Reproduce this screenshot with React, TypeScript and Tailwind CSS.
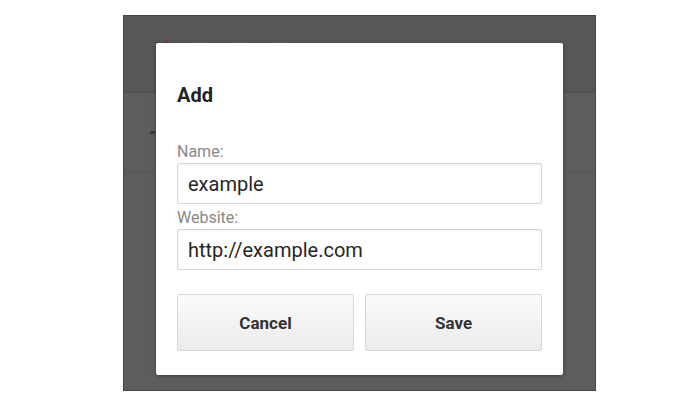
export default function App() {
  return (
    <div className="w-[700px] h-[400px] bg-white pt-[15px] pl-[123px] font-['Roboto',sans-serif]">
      <div className="relative w-[473px] h-[376px] bg-[#5d5d5d] border border-[#444] flex flex-col">
        {/* dimmed page behind the dialog */}
        <div className="h-[77px] bg-[#575757] border-b border-[#4f4f4f] flex items-start gap-6 pl-[40px] pt-[24px]">
          <div className="w-[4px] h-[4px] rounded-full bg-[#7a3a44]" />
          <div className="w-[18px] h-[2px] mt-[2px] bg-[#626262]" />
          <div className="w-[12px] h-[2px] mt-[2px] bg-[#626262]" />
          <div className="w-[20px] h-[2px] mt-[2px] bg-[#626262]" />
        </div>
        <div className="h-[80px] border-b border-[#565656] flex items-center pl-[26px]">
          <div className="w-[5px] h-[3px] bg-[#3c3c3c]" />
        </div>
        <div className="flex-1" />

        {/* dialog */}
        <div className="absolute left-[32px] top-[27px] w-[407px] h-[332px] bg-white rounded-[2px] shadow-[0_1px_4px_rgba(0,0,0,0.35)] px-[21px] pt-[40px] pb-[23px] flex flex-col">
          <h2 className="text-[20px] leading-[24px] font-bold text-[#222]">Add</h2>
          <label className="mt-[36px] text-[16px] leading-[18px] text-[#888]">Name:</label>
          <div className="mt-[2px] h-[41px] border border-[#d6d6d6] rounded-[2px] shadow-[inset_0_1px_2px_rgba(0,0,0,0.06)] flex items-center pl-[10px] text-[20px] text-[#262626]">
            example
          </div>
          <label className="mt-[5px] text-[16px] leading-[18px] text-[#888]">Website:</label>
          <div className="mt-[2px] h-[41px] border border-[#d6d6d6] rounded-[2px] shadow-[inset_0_1px_2px_rgba(0,0,0,0.06)] flex items-center pl-[10px] text-[20px] text-[#262626]">
            http://example.com
          </div>
          <div className="mt-[24px] flex gap-[11px]">
            <button className="flex-1 h-[57px] pt-[3px] border border-[#d9d9d9] rounded-[2px] bg-gradient-to-b from-[#fbfbfb] to-[#ebebeb] text-[17px] font-bold text-[#333]">
              Cancel
            </button>
            <button className="flex-1 h-[57px] pt-[3px] border border-[#d9d9d9] rounded-[2px] bg-gradient-to-b from-[#fbfbfb] to-[#ebebeb] text-[17px] font-bold text-[#333]">
              Save
            </button>
          </div>
        </div>
      </div>
    </div>
  );
}
